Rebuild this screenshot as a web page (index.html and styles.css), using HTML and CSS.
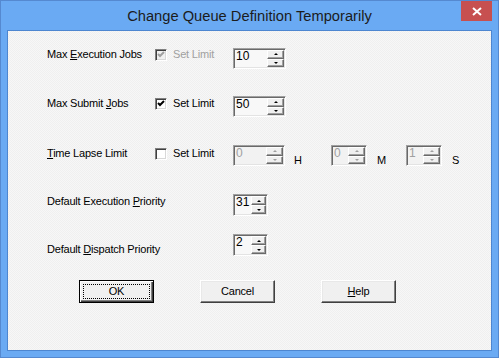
FILE: index.html
```html
<!DOCTYPE html>
<html>
<head>
<meta charset="utf-8">
<title>Change Queue Definition Temporarily</title>
<link rel="stylesheet" href="styles.css">
</head>
<body>
<div class="window">
  <div class="titlebar">
    <span class="title">Change Queue Definition Temporarily</span>
    <span class="close"><svg width="10" height="9" viewBox="0 0 10 9"><path d="M1 1 L9 8 M9 1 L1 8" stroke="#fff" stroke-width="2"/></svg></span>
  </div>
  <div class="client">
    <div class="row r1">
      <span class="label">Max <u>E</u>xecution Jobs</span>
      <span class="check disabled"><span class="box"><svg width="8" height="7" viewBox="0 0 8 7"><path d="M1 3 L3 5 L7 1" fill="none" stroke="currentColor" stroke-width="2"/></svg></span>Set Limit</span>
      <div class="spin s-lg"><span class="field">10</span><span class="arrows"><span class="ab"><i class="up"></i></span><span class="ab"><i class="down"></i></span></span></div>
    </div>
    <div class="row r2">
      <span class="label">Max Submit <u>J</u>obs</span>
      <span class="check"><span class="box"><svg width="8" height="7" viewBox="0 0 8 7"><path d="M1 3 L3 5 L7 1" fill="none" stroke="currentColor" stroke-width="2"/></svg></span>Set Limit</span>
      <div class="spin s-lg"><span class="field">50</span><span class="arrows"><span class="ab"><i class="up"></i></span><span class="ab"><i class="down"></i></span></span></div>
    </div>
    <div class="row r3">
      <span class="label"><u>T</u>ime Lapse Limit</span>
      <span class="check"><span class="box"></span>Set Limit</span>
      <div class="spin s-md off"><span class="field">0</span><span class="arrows"><span class="ab"><i class="up"></i></span><span class="ab"><i class="down"></i></span></span></div>
      <span class="unit u-h">H</span>
      <div class="spin s-sm off"><span class="field">0</span><span class="arrows"><span class="ab"><i class="up"></i></span><span class="ab"><i class="down"></i></span></span></div>
      <span class="unit u-m">M</span>
      <div class="spin s-sm off"><span class="field">1</span><span class="arrows"><span class="ab"><i class="up"></i></span><span class="ab"><i class="down"></i></span></span></div>
      <span class="unit u-s">S</span>
    </div>
    <div class="row r4">
      <span class="label wide">Default Execution <u>P</u>riority</span>
      <div class="spin s-xs tall"><span class="field">31</span><span class="arrows"><span class="ab"><i class="up"></i></span><span class="ab"><i class="down"></i></span></span></div>
    </div>
    <div class="row r5">
      <span class="label wide">Default <u>D</u>ispatch Priority</span>
      <div class="spin s-xs tall"><span class="field">2</span><span class="arrows"><span class="ab"><i class="up"></i></span><span class="ab"><i class="down"></i></span></span></div>
    </div>
    <div class="buttons">
      <span class="btn default"><span class="focus">OK</span></span>
      <span class="btn">Cancel</span>
      <span class="btn"><u>H</u>elp</span>
    </div>
  </div>
</div>
</body>
</html>
```

FILE: styles.css
```css
* { box-sizing: border-box; }
html, body { margin: 0; padding: 0; }
body {
  width: 499px;
  height: 358px;
  overflow: hidden;
  font-family: "Liberation Sans", Arial, sans-serif;
  background: #6aaaf3;
}
.window {
  width: 499px;
  height: 358px;
  background: #6aaaf3;
  border: 1px solid #5589d0;
  padding: 0 6px 6px;
  display: flex;
  flex-direction: column;
  position: relative;
}
.titlebar {
  height: 29px;
  flex: none;
  display: flex;
  justify-content: center;
  align-items: flex-start;
  padding-top: 6px;
}
.title {
  font-size: 14.7px;
  line-height: 18px;
  color: #1c1c1c;
}
.close {
  position: absolute;
  top: 0;
  right: 6px;
  width: 31px;
  height: 20px;
  background: #c75050;
  display: flex;
  align-items: center;
  justify-content: center;
}
.client {
  flex: 1;
  border: 1px solid #4d86d0;
  background: repeating-conic-gradient(#efefef 0 25%, #f7f7f7 0 50%) 0 0 / 2px 2px;
  padding: 17px 0 0 39px;
  display: flex;
  flex-direction: column;
  font-size: 11px;
  letter-spacing: -0.2px;
  color: #000;
}
.row {
  height: 13px;
  display: flex;
  align-items: flex-start;
  line-height: 13px;
}
.r2 { margin-top: 36px; }
.r3 { margin-top: 37px; }
.r4 { margin-top: 35px; }
.r5 { margin-top: 35px; }
.label {
  width: 108px;
  flex: none;
  white-space: nowrap;
}
.label.wide { width: 186px; }
.check {
  width: 78px;
  flex: none;
  height: 13px;
  display: flex;
  align-items: center;
  gap: 6px;
  white-space: nowrap;
}
.box {
  width: 12px;
  height: 12px;
  flex: none;
  border: 1px solid;
  border-color: #808080 #ffffff #ffffff #808080;
  box-shadow: inset 1px 1px #404040, inset -1px -1px #d8d8d8;
  background: #fff;
  display: flex;
  align-items: center;
  justify-content: center;
  color: #000;
}
.check.disabled { color: #a0a0a0; }
.check.disabled .box {
  background: #f0f0f0;
  color: #a0a0a0;
}
.spin {
  flex: none;
  height: 21px;
  display: flex;
  border: 1px solid;
  border-color: #a0a0a0 #ffffff #ffffff #a0a0a0;
  box-shadow: inset 1px 1px #696969, inset -1px -1px #e3e3e3;
  padding: 1px;
  background: #f8f8f8;
}
.spin.tall { height: 22px; }
.s-lg { width: 53px; }
.s-md { width: 52px; }
.s-sm { width: 36px; }
.s-xs { width: 35px; }
.r1 .spin { margin-top: 0; }
.r2 .spin { margin-top: -1px; }
.r3 .spin { margin-top: -2px; }
.r4 .spin { margin-top: -1px; }
.r5 .spin { margin-top: -9px; }
.field {
  flex: 1;
  font-size: 12px;
  letter-spacing: 0;
  line-height: 13px;
  padding-left: 1px;
  overflow: hidden;
}
.arrows {
  width: 17px;
  flex: none;
  display: flex;
  flex-direction: column;
}
.s-xs .arrows { width: 15px; }
.ab {
  flex: 1;
  border: 1px solid;
  border-color: #ffffff #696969 #696969 #ffffff;
  box-shadow: inset -1px -1px #a0a0a0;
  background: #f0f0f0;
  display: flex;
  align-items: center;
  justify-content: center;
}
.ab i {
  width: 0;
  height: 0;
  border-left: 2px solid transparent;
  border-right: 2px solid transparent;
}
.ab i.up { border-bottom: 2px solid #000; }
.ab i.down { border-top: 2px solid #000; }
.spin.off { background: #f2f2f2; }
.spin.off .field { color: #a0a0a0; }
.spin.off .ab i.up { border-bottom-color: #a0a0a0; }
.spin.off .ab i.down { border-top-color: #a0a0a0; }
.unit {
  flex: none;
  margin-top: 7px;
}
.u-h { margin-left: 9px; width: 37px; }
.u-m { margin-left: 10px; width: 29px; }
.u-s { margin-left: 10px; }
.buttons {
  margin-top: 24px;
  margin-left: 32px;
  display: flex;
  gap: 46px;
}
.btn {
  width: 75px;
  height: 23px;
  flex: none;
  display: flex;
  align-items: center;
  justify-content: center;
  background: #f0f0f0;
  border: 1px solid;
  border-color: #ffffff #404040 #404040 #ffffff;
  box-shadow: inset -1px -1px #808080, inset 1px 1px #e8e8e8;
  line-height: 13px;
}
.btn.default {
  border-color: #000;
  box-shadow: inset 1px 1px #ffffff, inset -1px -1px #404040, inset -2px -2px #808080;
  padding: 3px;
}
.focus {
  flex: 1;
  align-self: stretch;
  border: 1px dotted #000;
  display: flex;
  align-items: center;
  justify-content: center;
}
```
